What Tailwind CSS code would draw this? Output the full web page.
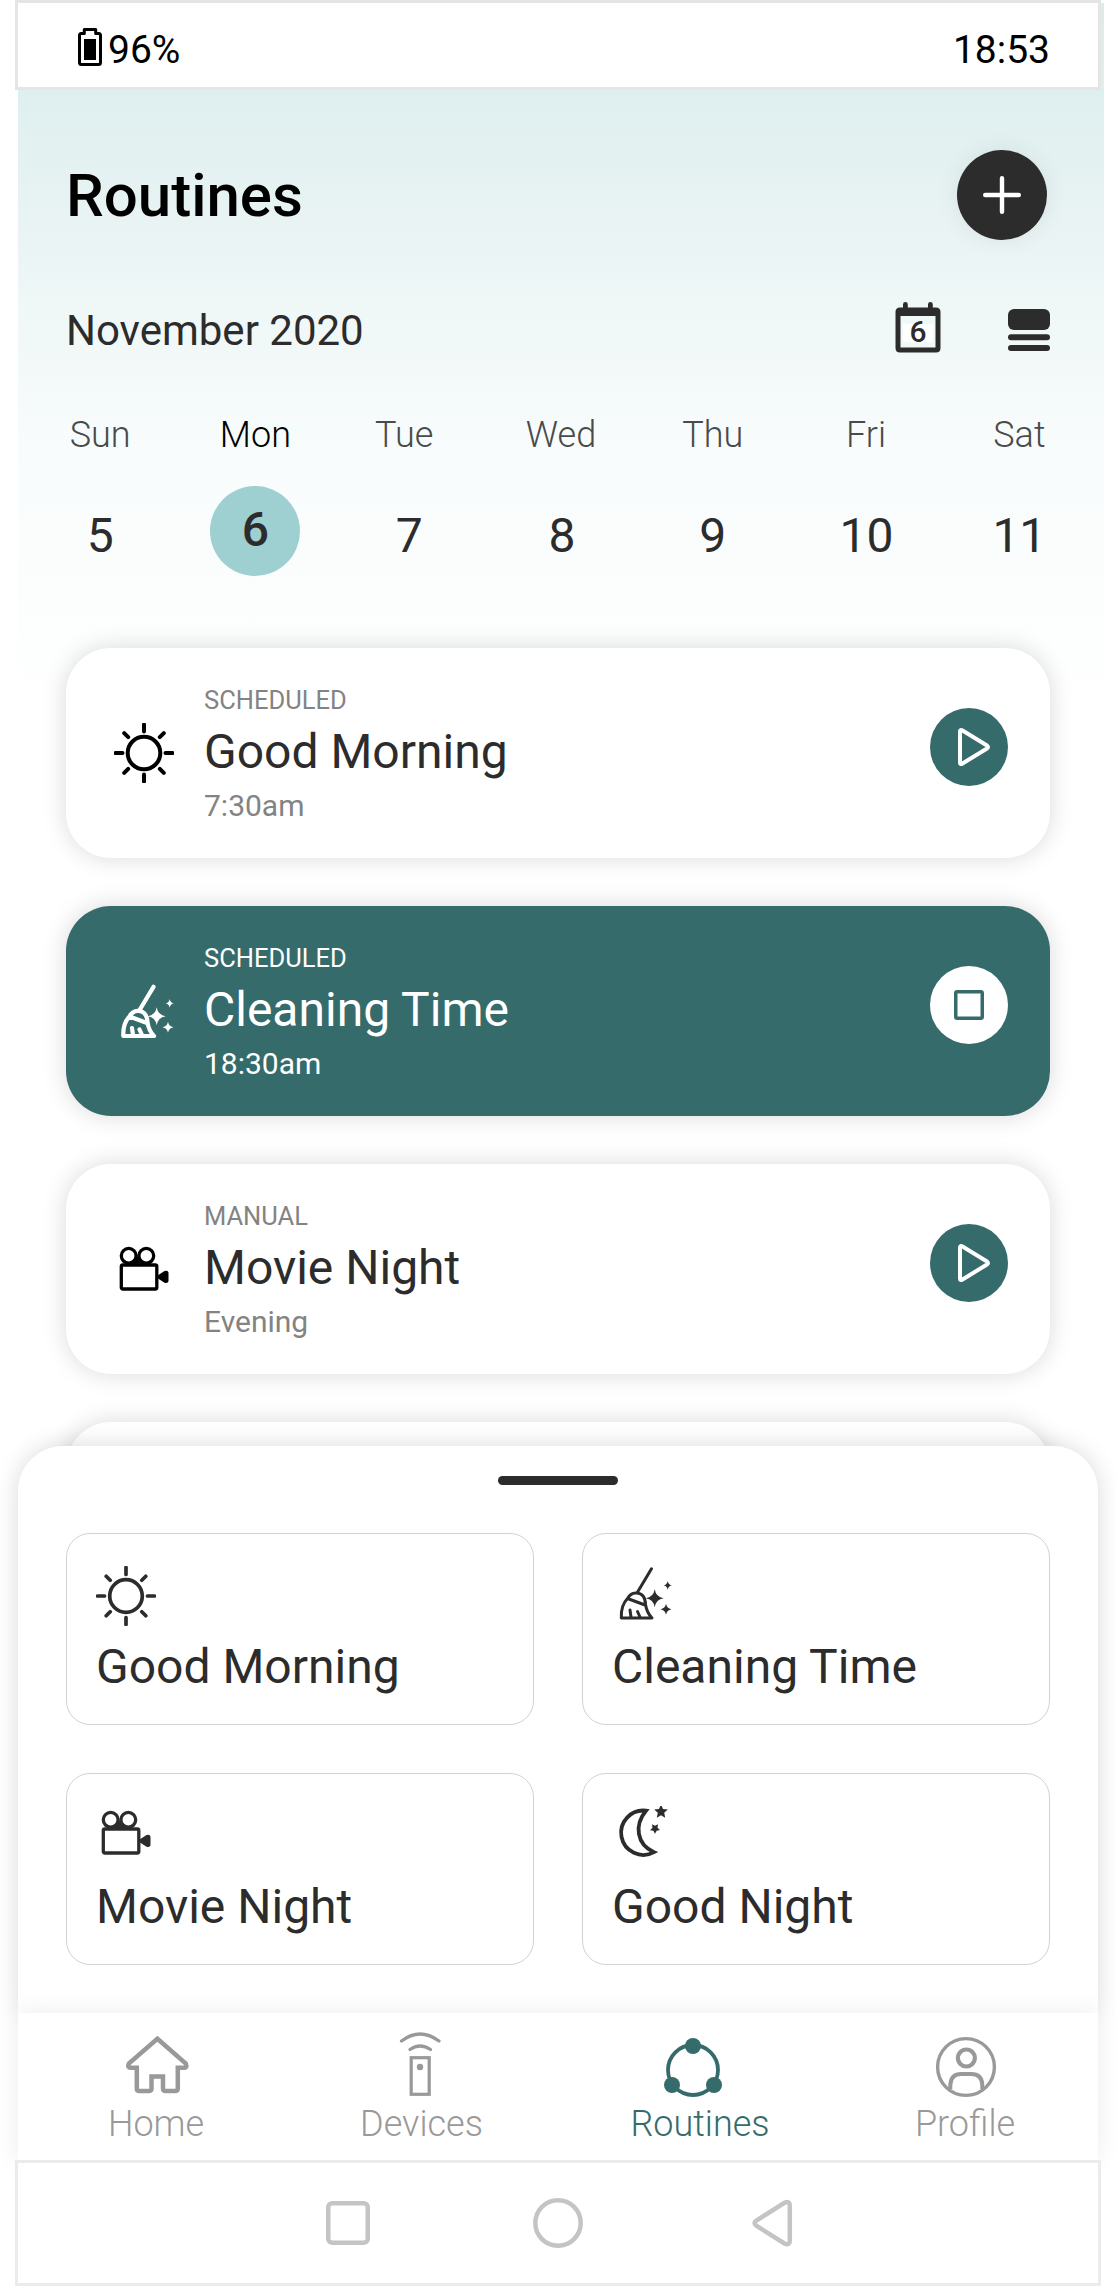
<!DOCTYPE html>
<html lang="en">
<head>
<meta charset="utf-8">
<title>Routines</title>
<script src="https://cdn.jsdelivr.net/npm/@tailwindcss/browser@4"></script>
</head>
<body class="bg-white">
<svg class="hidden">
  <symbol id="sun" viewBox="0 0 60 60"><g fill="none" stroke="currentColor" stroke-linecap="round"><circle cx="30" cy="30" r="16.3"/><path d="M30 1.5v7M30 51.5v7M1.5 30h7M51.5 30h7M10.2 10.2l4 4M45.8 45.8l4 4M10.2 49.8l4-4M45.8 14.2l4-4"/></g></symbol>
  <symbol id="broom" viewBox="0 0 60 60"><g fill="none" stroke="currentColor" stroke-linecap="round" stroke-linejoin="round"><path d="M39.5 5.8L25.3 29.5M15.5 35.5C18 31 21.500 29.500 25 30C30.500 30.500 33.300 34 33.500 41.500C34.500 47.500 37 52 40 55H9.300C9 47.500 10.500 40.500 15.500 35.500L33 42M18 47l1 7M25.500 48.500l2.500 5.500"/></g><path fill="currentColor" d="M42.700 26.300Q43.900 34.100 51.700 35.300Q43.900 36.500 42.700 44.300Q41.500 36.500 33.700 35.300Q41.500 34.100 42.700 26.300ZM55.700 17.900Q56.300 21.700 60 22.300Q56.300 22.900 55.700 26.700Q55.100 22.900 51.400 22.300Q55.100 21.700 55.700 17.900ZM54 40.800Q54.800 45.500 59.500 46.300Q54.800 47.100 54 51.800Q53.200 47.100 48.500 46.300Q53.200 45.500 54 40.800Z"/></symbol>
  <symbol id="camera" viewBox="0 0 60 60"><g fill="none" stroke="currentColor" stroke-width="3.300"><circle cx="14.700" cy="13.800" r="7.400"/><circle cx="32.300" cy="13.800" r="7.400"/><rect x="7.300" y="23" width="35.500" height="24" rx="1.500"/></g><path fill="currentColor" d="M18 22.500l5.500-8 5.500 8zM44 33.200l6.500-4.200q3.500-1 4 1.500v8.700q-.5 2.500-4 1.500L44 36.500z"/></symbol>
  <symbol id="play" viewBox="0 0 78 78"><path fill="none" stroke="currentColor" stroke-width="4" stroke-linejoin="round" d="M30 23.500Q30 21 32.500 22.500L57 37.500Q59 39 57 40.500L32.500 55.500Q30 57 30 54.500Z"/></symbol>
</svg>

<div class="relative h-[2286px] w-[1116px] overflow-hidden bg-white font-['Roboto'] text-[#2c2c2c]">
  <div class="absolute left-[18px] top-[3px] h-[720px] w-[1086px] bg-[linear-gradient(180deg,#dbecec_0px,#dfefef_87px,#e3f1f1_147px,#e9f3f4_222px,#eff7f7_300px,#f4f9f9_377px,#f8fcfc_447px,#fbfdfd_557px,#fff_717px)]"></div>

  <div class="relative flex h-full flex-col">
    <header class="ml-[15px] flex h-[90px] w-[1086px] shrink-0 items-start border-3 border-[#e5e5e5] bg-white text-[39px] leading-[60px] text-black">
      <svg class="ml-[60px] mt-[25px] h-[38px] w-6" viewBox="0 0 24 38"><path fill="none" stroke="currentColor" stroke-width="3" stroke-linejoin="round" d="M6.300 1.500h11.400v4h3q1.800 0 1.800 2v27q0 2-2 2H3.500q-2 0-2-2v-27q0-2 1.800-2h3z"/><path fill="currentColor" d="M6 11h12v21H6z"/></svg>
      <span class="ml-[6px] mt-[17px]">96%</span>
      <span class="ml-auto mr-[48px] mt-[17px]">18:53</span>
    </header>

    <section class="mx-[66px] shrink-0">
      <div class="mt-[60px] flex h-[90px] items-center justify-between">
        <h1 class="pt-0.5 text-[60px] font-medium leading-[90px] text-black">Routines</h1>
        <button class="mr-[3px] flex size-[90px] items-center justify-center rounded-full bg-[#2c2c2c] text-white shadow-[0_0_24px_rgba(0,0,0,0.07)]">
          <svg class="size-[38px]" viewBox="0 0 38 38"><path stroke="currentColor" stroke-width="4.400" stroke-linecap="round" d="M19 2.200v33.600M2.200 19h33.600"/></svg>
        </button>
      </div>
      <div class="mt-[60px] flex h-[60px] items-start">
        <h2 class="mt-px text-[42px] leading-[60px]">November 2020</h2>
        <svg class="ml-auto h-[54px] w-[46px]" viewBox="0 0 46 54"><path fill="currentColor" fill-rule="evenodd" d="M8 4.500a2.400 2.400 0 0 1 4.800 0V7.500H33V4.500a2.400 2.400 0 0 1 4.800 0V7.500H41q4.500 0 4.500 4.500v36q0 4.500-4.500 4.500H5Q.5 52.500.5 48V12Q.5 7.500 5 7.500h3zM5.500 16v31.500h35V16z"/><path fill="#fff" d="M8 24h30v18H8z"/><text x="23" y="42" text-anchor="middle" font-family="Roboto" font-size="30" font-weight="500" fill="currentColor">6</text></svg>
        <svg class="ml-[67px] mt-[9px] h-[42px] w-[42px]" viewBox="0 0 42 42"><g fill="currentColor"><rect width="42" height="21" rx="6"/><rect y="25.300" width="42" height="6" rx="3"/><rect y="36" width="42" height="6" rx="3"/></g></svg>
      </div>
    </section>

    <section class="ml-[23px] mt-[51px] w-[1073px] shrink-0 text-center">
      <div class="grid grid-cols-7 text-[36px] font-light leading-[48px] text-[#4a4a4a]">
        <span class="pl-px">Sun</span><span class="pl-[5px] text-black">Mon</span><span class="pr-1">Tue</span><span class="pl-[3px]">Wed</span><span>Thu</span><span>Fri</span><span>Sat</span>
      </div>
      <div class="mt-[27px] grid h-[90px] grid-cols-7 text-[48px] leading-[99px]">
        <span class="pl-px">5</span>
        <span class="ml-[34px] size-[90px] rounded-full bg-[#9ecfd1] font-medium leading-[87px]">6</span>
        <span class="pl-[6px]">7</span><span class="pl-[5px]">8</span><span>9</span><span class="pl-px">10</span><span>11</span>
      </div>
    </section>

    <main class="mx-[66px] mt-[72px] flex h-[798px] shrink-0 flex-col gap-12">
      <article class="flex h-[210px] shrink-0 rounded-[45px] bg-white pl-12 pr-[42px] shadow-[0_0_24px_rgba(0,0,0,0.15)]">
        <svg class="mt-[75px] size-[60px] stroke-[4px] text-black"><use href="#sun"/></svg>
        <div class="ml-[30px] pt-[37px] text-[#838383]">
          <p class="text-[25.5px] leading-[30px]">SCHEDULED</p>
          <h3 class="mt-[9px] text-[48px] leading-[56px] text-[#2c2c2c]">Good Morning</h3>
          <p class="mt-2 text-[30px] leading-[36px]">7:30am</p>
        </div>
        <button class="ml-auto mt-[60px] size-[78px] rounded-full bg-[#366b6c] text-white"><svg class="size-[78px]"><use href="#play"/></svg></button>
      </article>
      <article class="flex h-[210px] shrink-0 rounded-[45px] bg-[#366b6c] pl-12 pr-[42px] text-white shadow-[0_0_24px_rgba(0,0,0,0.15)]">
        <svg class="mt-[75px] size-[60px] stroke-[4.2px]"><use href="#broom"/></svg>
        <div class="ml-[30px] pt-[37px]">
          <p class="text-[25.5px] leading-[30px]">SCHEDULED</p>
          <h3 class="mt-[9px] text-[48px] leading-[56px]">Cleaning Time</h3>
          <p class="mt-2 text-[30px] leading-[36px]">18:30am</p>
        </div>
        <button class="ml-auto mt-[60px] flex size-[78px] items-center justify-center rounded-full bg-white"><svg class="size-[30px]" viewBox="0 0 30 30"><rect x="1.750" y="1.750" width="26.500" height="26.500" rx="1.500" fill="none" stroke="#366b6c" stroke-width="3.500"/></svg></button>
      </article>
      <article class="flex h-[210px] shrink-0 rounded-[45px] bg-white pl-12 pr-[42px] shadow-[0_0_24px_rgba(0,0,0,0.15)]">
        <svg class="mt-[78px] size-[60px] text-black"><use href="#camera"/></svg>
        <div class="ml-[30px] pt-[37px] text-[#838383]">
          <p class="text-[25.5px] leading-[30px]">MANUAL</p>
          <h3 class="mt-[9px] text-[48px] leading-[56px] text-[#2c2c2c]">Movie Night</h3>
          <p class="mt-2 text-[30px] leading-[36px]">Evening</p>
        </div>
        <button class="ml-auto mt-[60px] size-[78px] rounded-full bg-[#366b6c] text-white"><svg class="size-[78px]"><use href="#play"/></svg></button>
      </article>
      <article class="h-[210px] shrink-0 rounded-[45px] bg-white shadow-[0_0_24px_rgba(0,0,0,0.15)]"></article>
    </main>

    <div class="relative mx-[18px] h-[567px] shrink-0 rounded-t-[45px] bg-white pt-[30px] shadow-[0_0_24px_rgba(0,0,0,0.15)]">
      <div class="mx-auto h-[9px] w-[120px] rounded-full bg-[#2c2c2c]"></div>
      <div class="mx-12 mt-12 grid grid-cols-2 gap-12 text-[48px] leading-[56px]">
        <div class="h-[192px] rounded-[24px] border border-[#d2d2d2] pl-[29px] pt-8">
          <svg class="size-[60px] stroke-[3.7px]"><use href="#sun"/></svg>
          <h3 class="mt-[13px]">Good Morning</h3>
        </div>
        <div class="h-[192px] rounded-[24px] border border-[#d2d2d2] pl-[29px] pt-[29px]">
          <svg class="size-[60px] stroke-[3px]"><use href="#broom"/></svg>
          <h3 class="mt-4">Cleaning Time</h3>
        </div>
        <div class="h-[192px] rounded-[24px] border border-[#d2d2d2] pl-[29px] pt-8">
          <svg class="size-[60px]"><use href="#camera"/></svg>
          <h3 class="mt-[13px]">Movie Night</h3>
        </div>
        <div class="h-[192px] rounded-[24px] border border-[#d2d2d2] pl-[29px] pt-8">
          <svg class="size-[60px]" viewBox="0 0 60 60"><path fill="none" stroke="currentColor" stroke-width="3.800" d="M34 4.700A22.200 22.200 0 1 0 42 46.200C24.500 38.500 22 19 34 4.700Z"/><path fill="currentColor" d="M49-1.500l2 4.400 4.800.6-3.600 3.300 1 4.900L49 9.300l-4.200 2.400 1-4.900-3.600-3.300 4.800-.6zM43.300 23.500m-3.300-5.200l3 1.500 3-1.600-.5 3.500 2.500 2.400-3.300.7-1.700 3-1.600-3-3.400-.6 2.500-2.500z"/></svg>
          <h3 class="mt-[13px]">Good Night</h3>
        </div>
      </div>
    </div>

    <nav class="relative mx-[18px] flex h-[147px] shrink-0 bg-white text-center text-[36px] font-light leading-[48px] text-[#999] shadow-[0_0_24px_rgba(0,0,0,0.08)]">
      <a class="w-[278px]">
        <svg class="ml-[105px] mt-5 h-[66px] w-[69px]" viewBox="123 2033 69 66"><path fill="none" stroke="currentColor" stroke-width="4.500" d="M157.400 2038.800L185.800 2063.500Q187.500 2068 184 2067.800H177.800V2088.500Q177.800 2091 175 2091H166Q163 2091 163 2088.500V2076.500H151.500V2088.500Q151.500 2091 148.500 2091H139.500Q136.800 2091 136.800 2088.500V2067.800H131Q127 2068 128.800 2063.500Z"/></svg>
        <span class="mt-[1px] block pr-0.5">Home</span>
      </a>
      <a class="w-[252px]">
        <svg class="ml-[90px] mt-[18px] h-[69px] w-[69px]" viewBox="386 2031 69 69"><g fill="none" stroke="currentColor" stroke-width="3.200" stroke-linecap="round"><path d="M401.500 2041Q420 2027 439 2041M410 2049.500Q420 2042.500 430.500 2049.500"/><rect x="411.200" y="2057.700" width="18" height="36.600"/></g><circle cx="420" cy="2067" r="3.200" fill="currentColor"/></svg>
        <span class="block pr-px">Devices</span>
      </a>
      <a class="w-[304px] text-[#366b6c]">
        <svg class="ml-[111px] mt-[18px] h-[69px] w-[69px]" viewBox="659 2031 69 69"><circle cx="693" cy="2070" r="25" fill="none" stroke="currentColor" stroke-width="3.800"/><g fill="currentColor"><circle cx="693" cy="2046" r="8"/><circle cx="672" cy="2085" r="8"/><circle cx="714" cy="2085" r="8"/></g></svg>
        <span class="block">Routines</span>
      </a>
      <a class="w-[227px]">
        <svg class="ml-[80px] mt-[18px] h-[69px] w-[69px]" viewBox="932 2031 69 69"><g fill="none" stroke="currentColor"><circle cx="966" cy="2067" r="28.400" stroke-width="3.400"/><circle cx="966.400" cy="2058" r="8.500" stroke-width="4.200"/><path stroke-width="4" d="M950.300 2089V2085Q951 2074 961 2074H971Q982 2074 982.300 2085V2089"/></g></svg>
        <span class="block pr-px">Profile</span>
      </a>
    </nav>

    <footer class="relative ml-[15px] flex h-[126px] w-[1086px] shrink-0 items-center border-3 border-[#ebebeb] bg-white text-[#c4c4c4]">
      <svg class="ml-[308px] size-11" viewBox="0 0 44 44"><rect x="2.250" y="2.250" width="39.500" height="39.500" rx="4" fill="none" stroke="currentColor" stroke-width="4.500"/></svg>
      <svg class="ml-[163px] size-[50px]" viewBox="0 0 50 50"><circle cx="25" cy="25" r="22.700" fill="none" stroke="currentColor" stroke-width="4.500"/></svg>
      <svg class="ml-[168px] h-[48px] w-[46px]" viewBox="0 0 46 48"><path fill="none" stroke="currentColor" stroke-width="4.500" d="M5 21.800Q2 24 5 26.500L33.500 44.500Q38.800 47 38.800 41V7Q38.800 1.500 33.500 3.800Z"/></svg>
    </footer>
  </div>
</div>
</body>
</html>
